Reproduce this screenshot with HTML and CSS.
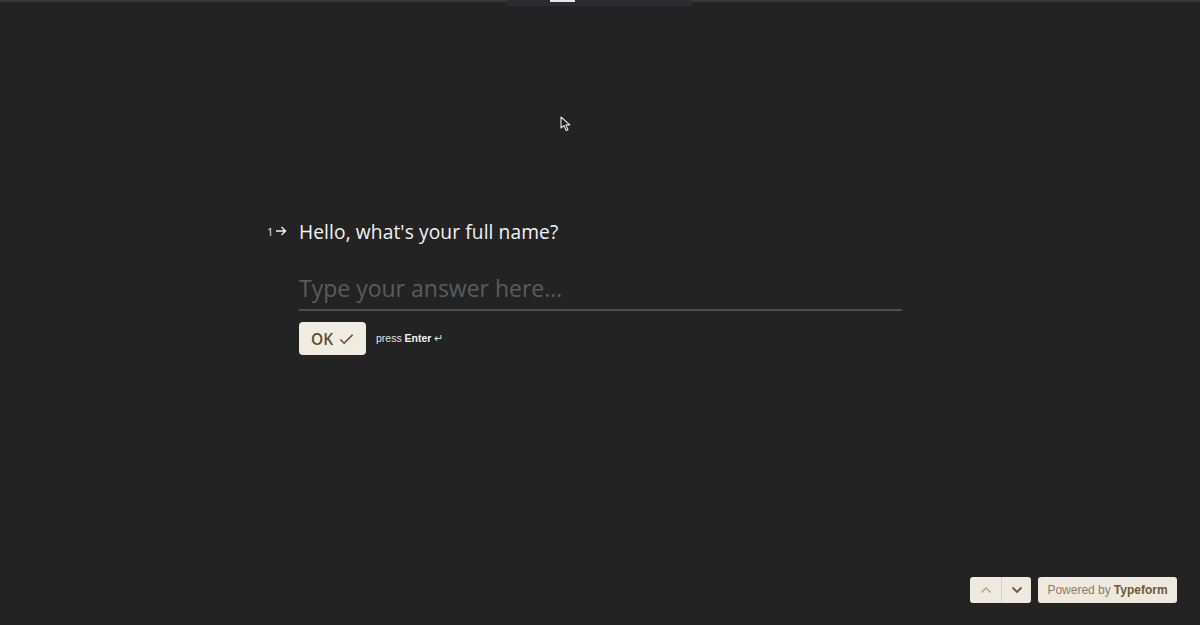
FILE: index.html
```html
<!DOCTYPE html>
<html>
<head>
<meta charset="utf-8">
<link rel="stylesheet" href="styles.css">
</head>
<body>
<div class="topbar"><div class="tab"><div class="pill"></div></div></div>
<svg class="cursor" width="12" height="16" viewBox="0 0 12 16"><path d="M1 1 L1 12 L4 9.5 L6.2 14.5 L8 13.7 L5.9 8.9 L9.8 8.9 Z" fill="#1e1e1e" stroke="#e6e6e6" stroke-width="1.1" stroke-linejoin="round"/></svg>
<main class="stage">
  <div class="question">
    <div class="qhead">
      <span class="qnum">1<svg class="qarrow" width="12" height="10" viewBox="0 0 12 10"><path d="M1 5 H10.5 M6.5 1 L10.5 5 L6.5 9" fill="none" stroke="#f0f0f0" stroke-width="1.4"/></svg></span>
      <span class="qtext">Hello, what's your full name?</span>
    </div>
    <div class="answer">
      <div class="input">Type your answer here...</div>
      <div class="actions">
        <button class="ok">OK <svg width="15" height="12" viewBox="0 0 16 12"><path d="M1.5 6.5 L5.5 10.5 L14.5 1.5" fill="none" stroke="#5e4d2e" stroke-width="1.7"/></svg></button>
        <span class="hint">press <b>Enter</b> <span class="ret">↵</span></span>
      </div>
    </div>
  </div>
</main>
<footer class="footer">
  <div class="nav">
    <button class="navbtn"><svg width="12" height="8" viewBox="0 0 12 8"><path d="M1.5 6.5 L6 2 L10.5 6.5" fill="none" stroke="#b5a88c" stroke-width="1.6"/></svg></button>
    <button class="navbtn"><svg width="12" height="8" viewBox="0 0 12 8"><path d="M1.5 1.5 L6 6 L10.5 1.5" fill="none" stroke="#6b5a38" stroke-width="1.8"/></svg></button>
  </div>
  <div class="powered">Powered by <b>Typeform</b></div>
</footer>
</body>
</html>
```

FILE: styles.css
```css
html, body {
  margin: 0;
  padding: 0;
  height: 100%;
}
body {
  background: #232323;
  font-family: "Open Sans", "Liberation Sans", sans-serif;
  color: #f0f0f0;
  width: 1200px;
  height: 625px;
  overflow: hidden;
  position: relative;
}
.topbar {
  height: 2px;
  background: #3a3a3a;
  display: flex;
  justify-content: flex-start;
  padding-left: 507px;
}
.tab {
  width: 185px;
  height: 6px;
  background: #2b2c30;
  padding-left: 43px;
  box-sizing: border-box;
}
.pill {
  width: 25px;
  height: 1.5px;
  background: #e8e8e8;
}
.cursor {
  position: absolute;
  left: 560px;
  top: 116px;
}
.stage {
  padding-top: 215px;
  padding-left: 266px;
}
.qhead {
  display: flex;
  align-items: center;
  height: 28px;
}
.qnum {
  width: 33px;
  font-size: 11px;
  display: flex;
  align-items: center;
  gap: 2px;
  color: #e8e8e8;
  padding-left: 1px;
  box-sizing: border-box;
}
.qtext {
  font-size: 19.2px;
  letter-spacing: 0.1px;
  color: #f2f2f2;
}
.answer {
  padding-left: 33px;
  padding-top: 26px;
}
.input {
  width: 603px;
  font-size: 23px;
  color: #5b5b5b;
  height: 34px;
  line-height: 34px;
  border-bottom: 2px solid #4f4f4f;
  padding-bottom: 4px;
}
.actions {
  display: flex;
  align-items: center;
  margin-top: 11px;
  gap: 10px;
}
.ok {
  width: 67px;
  height: 33px;
  border: none;
  border-radius: 4px;
  background: #f1ece2;
  color: #5e4d2e;
  font-family: "Open Sans", "Liberation Sans", sans-serif;
  font-weight: 600;
  font-size: 15.5px;
  display: flex;
  align-items: center;
  justify-content: center;
  gap: 6px;
  padding: 0;
}
.hint {
  font-family: "Liberation Sans", Arial, sans-serif;
  font-size: 10.5px;
  color: #e0e0e0;
}
.hint b {
  color: #f4f4f4;
}
.ret {
  font-size: 11px;
}
.footer {
  position: absolute;
  right: 23px;
  bottom: 22px;
  display: flex;
  gap: 7px;
}
.nav {
  display: flex;
  border-radius: 3px;
  overflow: hidden;
}
.navbtn {
  width: 31px;
  height: 26px;
  border: none;
  background: #efe9df;
  display: flex;
  align-items: center;
  justify-content: center;
  padding: 0;
}
.navbtn + .navbtn {
  border-left: 1px solid #d8d0c0;
  width: 30px;
}
.powered {
  height: 26px;
  width: 139px;
  box-sizing: border-box;
  border-radius: 3px;
  background: #efe9df;
  color: #8a7c62;
  font-family: "Liberation Sans", Arial, sans-serif;
  font-size: 12px;
  display: flex;
  align-items: center;
  justify-content: center;
}
.powered b {
  color: #6b5a38;
  margin-left: 3px;
}
```
